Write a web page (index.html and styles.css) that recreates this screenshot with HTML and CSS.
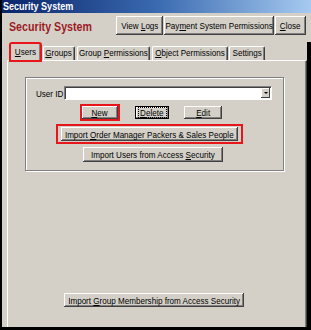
FILE: index.html
```html
<!DOCTYPE html>
<html>
<head>
<meta charset="utf-8">
<link rel="stylesheet" href="styles.css">
</head>
<body>
<div class="win">
  <div class="titlebar"><span class="t tl">Security System</span></div>
  <div class="header">
    <h1 class="apptitle"><span class="t tl">Security System</span></h1>
    <div class="hbtns">
      <button type="button" class="btn b-logs"><span class="t">View <u>L</u>ogs</span></button>
      <button type="button" class="btn b-pay"><span class="t">Pay<u>m</u>ent System Permissions</span></button>
      <button type="button" class="btn b-close"><span class="t"><u>C</u>lose</span></button>
    </div>
  </div>
  <div class="lower">
    <div class="tabs">
      <div class="tab active t-users"><span class="t"><u>U</u>sers</span></div>
      <div class="tab t-groups"><span class="t"><u>G</u>roups</span></div>
      <div class="tab t-gperm"><span class="t">Group <u>P</u>ermissions</span></div>
      <div class="tab t-operm"><span class="t"><u>O</u>bject Permissions</span></div>
      <div class="tab t-settings"><span class="t">Settings</span></div>
    </div>
    <div class="panel">
      <div class="group">
        <div class="userrow">
          <span class="lbl"><span class="t tl">User ID</span></span>
          <div class="combo"><span class="drop"><span class="tri"></span></span></div>
        </div>
        <div class="btnrow">
          <button type="button" class="btn b-new marked"><span class="t"><u>N</u>ew</span></button>
          <button type="button" class="btn b-delete"><span class="focus"><span class="t"><u>D</u>elete</span></span></button>
          <button type="button" class="btn b-edit"><span class="t"><u>E</u>dit</span></button>
        </div>
        <div class="redbox r-order">
          <button type="button" class="btn b-order"><span class="t">Import <u>O</u>rder Manager Packers &amp; Sales People</span></button>
        </div>
        <button type="button" class="btn b-users"><span class="t">Import Users from Access <u>S</u>ecurity</span></button>
      </div>
      <button type="button" class="btn b-gm"><span class="t">Import <u>G</u>roup Membership from Access Security</span></button>
    </div>
  </div>
</div>
</body>
</html>
```

FILE: styles.css
```css
html, body {
  margin: 0;
  padding: 0;
  background: #000;
}
body {
  font-family: "Liberation Sans", Arial, sans-serif;
}
.t {
  display: inline-block;
  white-space: nowrap;
  transform: scaleX(0.85);
}
.tl {
  transform-origin: left center;
}
.win {
  width: 311px;
  height: 330px;
  box-sizing: border-box;
  background: #d4d0c8;
  border-left: 2px solid #000;
  border-bottom: 3px solid #000;
  display: flex;
  flex-direction: column;
  overflow: hidden;
}
.titlebar {
  height: 13px;
  flex: none;
  background: linear-gradient(90deg, #0a246a 0%, #3a6ab0 50%, #a6caf0 100%);
  color: #fff;
  font-weight: bold;
  font-size: 11px;
  line-height: 13px;
  padding-left: 1px;
}
.titlebar .t { transform: scaleX(0.82); }
.header {
  height: 29px;
  flex: none;
  box-sizing: border-box;
  padding-top: 3px;
  display: flex;
  align-items: flex-start;
}
.apptitle {
  margin: 3px 0 0 7px;
  font-size: 13px;
  line-height: 15px;
  font-weight: bold;
  color: #9c1a1f;
  width: 90px;
}
.apptitle .t { transform: scaleX(0.82); }
.hbtns {
  margin-left: auto;
  margin-right: 5px;
  display: flex;
  gap: 1px;
}
.btn {
  font-family: "Liberation Sans", Arial, sans-serif;
  font-size: 9.5px;
  color: #000;
  background: #d4d0c8;
  border: 0;
  padding: 0;
  margin: 0;
  height: 15px;
  box-sizing: border-box;
  box-shadow: inset -1px -1px #404040, inset 1px 1px #fff, inset -2px -2px #808080;
  display: flex;
  align-items: center;
  justify-content: center;
  white-space: nowrap;
  overflow: visible;
}
.hbtns .btn { height: 19px; }
.b-logs { width: 47px; }
.b-pay { width: 110px; }
.b-close { width: 31px; }

.lower {
  flex: 1;
  display: flex;
  flex-direction: column;
  border-right: 4px solid #000;
  padding-left: 5px;
  min-height: 0;
}
.tabs {
  height: 18px;
  flex: none;
  display: flex;
  align-items: flex-end;
  padding-left: 3px;
  position: relative;
  z-index: 1;
}
.tab {
  height: 14px;
  box-sizing: border-box;
  border-top: 1px solid #fff;
  border-left: 1px solid #fff;
  border-right: 1px solid #404040;
  box-shadow: inset -1px 0 #808080;
  border-radius: 2px 2px 0 0;
  font-size: 9.5px;
  line-height: 12px;
  display: flex;
  justify-content: center;
  margin-right: 2px;
  white-space: nowrap;
}
.tab.active {
  height: 18px;
  margin-bottom: -1px;
  line-height: 15px;
  background: #d4d0c8;
  outline: 2px solid #e8161b;
  outline-offset: -1px;
}
.t-users { width: 31px; margin-right: 2px; }
.t-groups { width: 32px; }
.t-gperm { width: 73px; }
.t-operm { width: 76px; margin-right: 1px; }
.t-settings { width: 36px; }

.panel {
  flex: 1;
  display: flex;
  flex-direction: column;
  border-top: 1px solid #fff;
  border-left: 1px solid #fff;
  border-right: 1px solid #404040;
  box-shadow: inset -1px 0 #808080;
  width: 300px;
  box-sizing: border-box;
}
.group {
  margin: 16px 0 0 17px;
  width: 259px;
  height: 94px;
  box-sizing: border-box;
  border: 1px solid #808080;
  box-shadow: inset 1px 1px #fff, 1px 1px #fff;
  display: flex;
  flex-direction: column;
  align-items: flex-start;
}
.userrow {
  margin-top: 8px;
  padding-left: 10px;
  display: flex;
  align-items: center;
  height: 14px;
}
.lbl {
  width: 28px;
  font-size: 9.5px;
  white-space: nowrap;
}
.combo {
  width: 208px;
  height: 14px;
  box-sizing: border-box;
  background: #fff;
  border: 1px solid;
  border-color: #808080 #fff #fff #808080;
  box-shadow: inset 1px 1px #404040;
  display: flex;
  justify-content: flex-end;
  align-items: center;
  padding-right: 1px;
}
.drop {
  width: 9px;
  height: 10px;
  background: #d4d0c8;
  box-shadow: inset -1px -1px #404040, inset 1px 1px #fff;
  display: flex;
  align-items: center;
  justify-content: center;
}
.tri {
  width: 0;
  height: 0;
  border-left: 2px solid transparent;
  border-right: 2px solid transparent;
  border-top: 2px solid #000;
}
.btnrow {
  margin-top: 6px;
  padding-left: 56px;
  display: flex;
  height: 13px;
}
.btnrow .btn { height: 13px; }
.b-new { width: 36px; }
.marked { outline: 2px solid #e8161b; }
.b-delete {
  width: 34px;
  margin: 0 15px 0 17px;
  border: 1px solid #000;
  box-shadow: inset -1px -1px #808080, inset 1px 1px #fff;
}
.focus {
  outline: 1px dotted #000;
  line-height: 9px;
  display: flex;
  justify-content: center;
  width: 27px;
}
.b-edit { width: 38px; }
.redbox {
  margin: 5px 0 0 30px;
  border: 2px solid #e8161b;
  padding: 1px 3px;
}
.b-order { width: 177px; height: 14px; }
.b-users {
  margin: 3px 0 0 57px;
  width: 140px;
}
.b-gm {
  margin: auto 0 20px 56px;
  width: 180px;
  height: 14px;
}
```
